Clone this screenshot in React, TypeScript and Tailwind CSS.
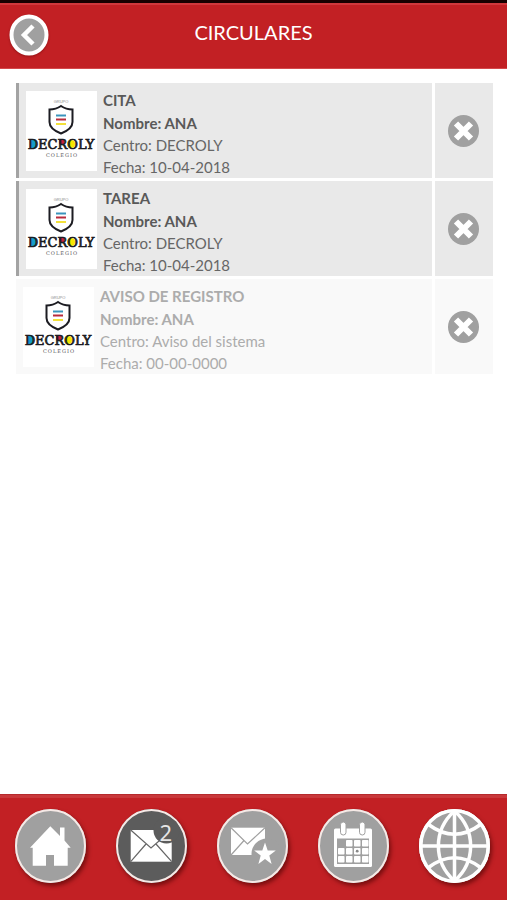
import type { ReactNode } from "react";
import clsx from "clsx";

type Circular = {
  id: number;
  title: string;
  name: string;
  center: string;
  date: string;
  read: boolean;
};

const circulars: Circular[] = [
  { id: 1, title: "CITA", name: "ANA", center: "DECROLY", date: "10-04-2018", read: false },
  { id: 2, title: "TAREA", name: "ANA", center: "DECROLY", date: "10-04-2018", read: false },
  { id: 3, title: "AVISO DE REGISTRO", name: "ANA", center: "Aviso del sistema", date: "00-00-0000", read: true },
];

function SchoolLogo() {
  return (
    <svg viewBox="0 0 71 80" className="h-20 w-[71px] shrink-0 bg-white" role="img" aria-label="Colegio Decroly">
      <text x="35" y="12" textAnchor="middle" fontSize="4" fill="#8a8a8a" fontFamily="Liberation Sans, sans-serif">
        GRUPO
      </text>
      <path
        d="M35 15 Q40 18.500 46.500 18.500 V31 Q46.500 38 35 42.500 Q23.500 38 23.500 31 V18.500 Q30 18.500 35 15 Z"
        fill="#fff"
        stroke="#1c1c22"
        strokeWidth="2"
      />
      <path d="M30 24.500 H40" stroke="#3a94bd" strokeWidth="2" />
      <path d="M30 28.500 H40" stroke="#b92b3c" strokeWidth="2" />
      <path d="M30 33 H40" stroke="#f3e13a" strokeWidth="2" />
      <rect x="4" y="49" width="6" height="8" fill="#149ccb" />
      <rect x="33" y="49" width="5" height="4" fill="#c8203f" />
      <ellipse cx="45" cy="53" rx="4" ry="4" fill="#f7e600" />
      <text
        x="35"
        y="58"
        textAnchor="middle"
        fontSize="13"
        fill="#1c1c22"
        stroke="#1c1c22"
        strokeWidth="0.700"
        fontFamily="DejaVu Serif, serif"
      >
        DECROLY
      </text>
      <text x="36" y="66" textAnchor="middle" fontSize="5" letterSpacing="1" fill="#555" fontFamily="DejaVu Serif, serif">
        COLEGIO
      </text>
    </svg>
  );
}

function CircularRow({ item }: { item: Circular }) {
  return (
    <li className={clsx("flex h-[95px] gap-[3px]", item.read ? "text-[#acacac]" : "text-[#666]")}>
      <div
        className={clsx(
          "flex flex-1 items-start pt-1",
          item.read ? "bg-[#f9f9f9] pl-[7px]" : "border-l-[3px] border-[#a3a3a3] bg-[#e9e9e9] pl-[7px]"
        )}
      >
        <div className="pt-1">
          <SchoolLogo />
        </div>
        <div className="pt-px pl-1.5 text-[15px] leading-[22px]">
          <h2 className={clsx("leading-6 font-bold", !item.read && "text-[#595959]")}>{item.title}</h2>
          <p className={clsx("font-bold", !item.read && "text-[#595959]")}>Nombre: {item.name}</p>
          <p>Centro: {item.center}</p>
          <p>Fecha: {item.date}</p>
        </div>
      </div>
      <div className={clsx("flex w-[58px] items-center justify-center", item.read ? "bg-[#f9f9f9]" : "bg-[#e9e9e9]")}>
        <button type="button" aria-label={`Eliminar ${item.title}`}>
          <svg viewBox="0 0 32 33" className="h-[33px] w-8">
            <ellipse cx="15.500" cy="17" rx="15.500" ry="16" fill="#a0a0a0" />
            <path d="M8 9.500 L23 24.500 M23 9.500 L8 24.500" stroke="#fff" strokeWidth="6" />
          </svg>
        </button>
      </div>
    </li>
  );
}

function NavButton({ label, active, children }: { label: string; active?: boolean; children: ReactNode }) {
  return (
    <button
      type="button"
      aria-label={label}
      className={clsx(
        "relative h-[74px] w-[71px] rounded-[50%] shadow-[2px_3px_4px_rgba(70,0,0,0.6)]",
        active ? "bg-[#5c5c5c]" : "bg-[#a0a0a0]"
      )}
    >
      <svg viewBox="0 0 71 74" className="block h-[74px] w-[71px]">
        <ellipse cx="35.500" cy="37" rx="34.500" ry="36" fill="none" stroke="#f6e9e6" strokeWidth="2" />
        {children}
      </svg>
      {active && (
        <span className="absolute top-[11px] right-[15px] font-[Noto_Sans,sans-serif] text-[22px] leading-6 text-[#e6e6e6]">
          2
        </span>
      )}
    </button>
  );
}

function CalendarCells() {
  const columns = [20, 28, 36, 44];
  const rows = [31, 39, 47];
  return (
    <>
      {rows.map((y, row) =>
        columns
          .filter((_, col) => row > 0 || col > 0)
          .map(x => <rect key={`${x}-${y}`} x={x} y={y} width="6.500" height="6.500" rx="0.800" fill="#fff" />)
      )}
      <circle cx="39.200" cy="42.200" r="1.400" fill="#888" />
    </>
  );
}

function App() {
  return (
    <div className="flex min-h-screen flex-col bg-white font-[Lato,sans-serif]">
      <header className="grid h-[69px] grid-cols-[1fr_auto_1fr] items-start border-t-[3px] border-b border-t-[#180000] border-b-[#d4484b] bg-[#c22024] px-[9px] shadow-[inset_0_2px_0_#d0383c]">
        <button type="button" aria-label="Volver" className="mt-[11px] w-10">
          <svg viewBox="0 0 40 42" className="h-[42px] w-10 drop-shadow-[0_1px_1px_rgba(80,0,0,0.4)]">
            <ellipse cx="20" cy="21" rx="17.500" ry="18.500" fill="#a0a0a0" stroke="#fff" strokeWidth="4" />
            <path d="M24 12 L15 21 L24 30" fill="none" stroke="#fff" strokeWidth="4.500" />
          </svg>
        </button>
        <h1 className="mt-[13px] text-[20px] leading-8 text-white">CIRCULARES</h1>
      </header>

      <main className="flex-1 px-4 pt-3.5 pr-3.5">
        <ul className="flex flex-col gap-[3px]">
          {circulars.map(item => (
            <CircularRow key={item.id} item={item} />
          ))}
        </ul>
      </main>

      <nav className="grid h-[106px] grid-cols-5 justify-items-center border-t border-[#b52a2d] bg-[#c22024] pt-3.5 pr-0.5 shadow-[inset_0_3px_0_#c9383b]">
        <NavButton label="Inicio">
          <path
            d="M35.300 17.300 L45 27 V18.500 H49.500 V31.500 L55.700 38.700 H52.700 V56.700 H39 V46 H31 V56.700 H17.700 V38.700 H15 Z"
            fill="#fff"
          />
        </NavButton>
        <NavButton label="Circulares" active>
          <rect x="14.700" y="21" width="41" height="31.700" fill="#fff" />
          <path
            d="M14.700 21 L35 39 L55.700 21 M14.700 52.700 L30 35 M55.700 52.700 L40 35"
            fill="none"
            stroke="#666"
            strokeWidth="1.200"
          />
          <circle cx="50.500" cy="21.500" r="13" fill="#5c5c5c" />
        </NavButton>
        <NavButton label="Favoritos">
          <rect x="14" y="18.700" width="34" height="27.300" fill="#fff" />
          <path
            d="M14 18.700 L30.500 35 L48 18.700 M14 46 L27 31.500"
            fill="none"
            stroke="#a0a0a0"
            strokeWidth="1.200"
          />
          <circle cx="50" cy="45" r="15.500" fill="#a0a0a0" />
          <path
            d="M48 33.500 L50.700 41.500 H58.800 L52.300 46.500 L54.600 55 L48 50 L41.400 55 L43.700 46.500 L37.200 41.500 H45.300 Z"
            fill="#fff"
          />
        </NavButton>
        <NavButton label="Calendario">
          <rect x="16" y="19.500" width="38" height="38.500" rx="1.500" fill="#fff" />
          <rect x="19" y="29.500" width="32" height="25.500" fill="#a0a0a0" />
          <CalendarCells />
          <rect x="22.500" y="13" width="5.500" height="13" rx="2.700" fill="#fff" stroke="#a0a0a0" />
          <rect x="41.500" y="13" width="5.500" height="13" rx="2.700" fill="#fff" stroke="#a0a0a0" />
        </NavButton>
        <NavButton label="Web">
          <g fill="none" stroke="#fff" strokeWidth="3.500">
            <ellipse cx="35.500" cy="37" rx="33.700" ry="35.200" />
            <path d="M35.500 2 V72 M2 37 H69" />
            <path d="M35.500 2 C14 21 14 53 35.500 72 C57 53 57 21 35.500 2" />
            <path d="M9.500 15.500 Q35.500 35 61.500 15.500 M9.500 58.500 Q35.500 39 61.500 58.500" />
          </g>
        </NavButton>
      </nav>
    </div>
  );
}

export default App;
